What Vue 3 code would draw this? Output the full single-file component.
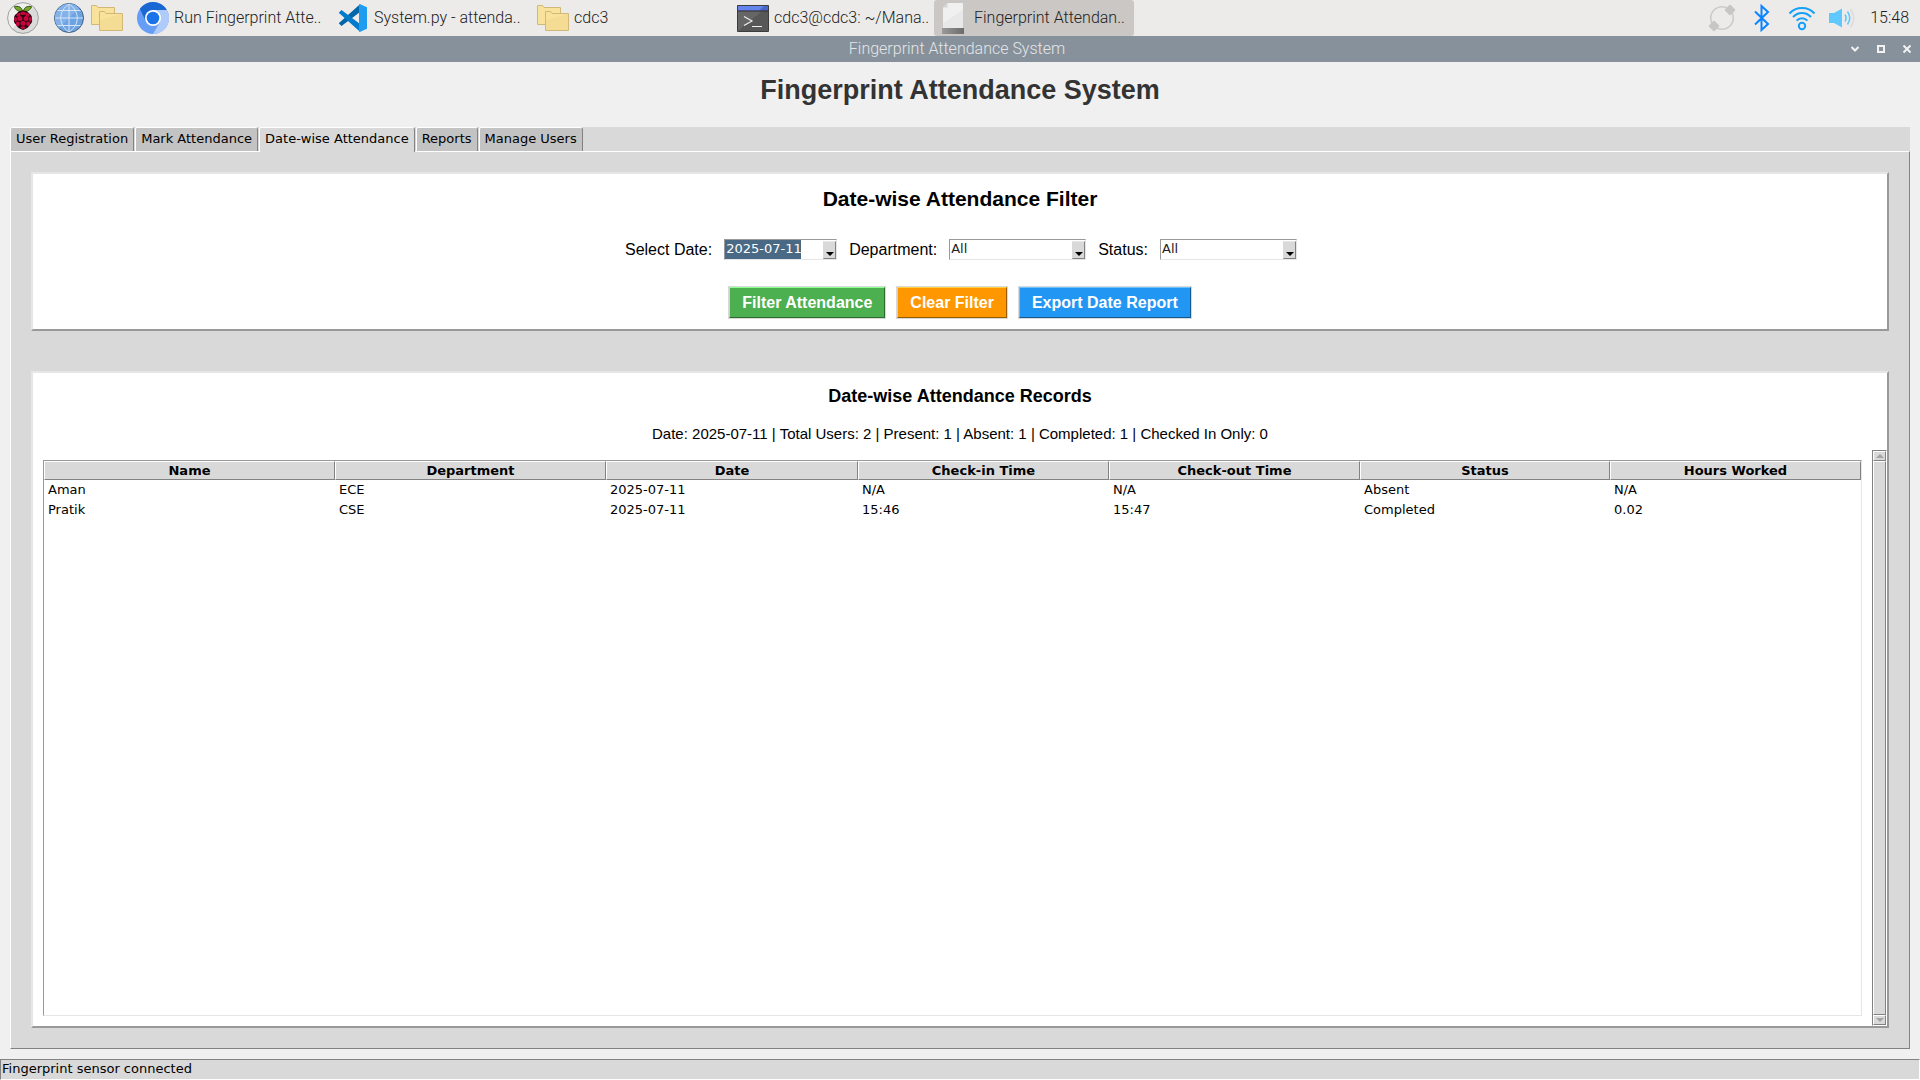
<script setup>
import { ref } from 'vue'

const launchers = [
  { icon: 'menu', label: 'Menu' },
  { icon: 'globe', label: 'Web Browser' },
  { icon: 'folder', label: 'File Manager' },
]
const tasks = [
  { icon: 'chromium', title: 'Run Fingerprint Atte..' },
  { icon: 'code', title: 'System.py - attenda..' },
  { icon: 'folder', title: 'cdc3' },
  { icon: 'terminal', title: 'cdc3@cdc3: ~/Mana..' },
  { icon: 'document', title: 'Fingerprint Attendan..', active: true },
]
const tabs = ['User Registration', 'Mark Attendance', 'Date-wise Attendance', 'Reports', 'Manage Users']
const activeTab = ref('Date-wise Attendance')

const date = ref('2025-07-11')
const department = ref('All')
const status = ref('All')

const columns = [
  { name: 'Name', width: 291 },
  { name: 'Department', width: 271 },
  { name: 'Date', width: 252 },
  { name: 'Check-in Time', width: 251 },
  { name: 'Check-out Time', width: 251 },
  { name: 'Status', width: 250 },
  { name: 'Hours Worked', width: 251 },
]
const records = [
  ['Aman', 'ECE', '2025-07-11', 'N/A', 'N/A', 'Absent', 'N/A'],
  ['Pratik', 'CSE', '2025-07-11', '15:46', '15:47', 'Completed', '0.02'],
]
</script>

<template>
  <svg class="defs" width="0" height="0" aria-hidden="true">
    <defs>
      <linearGradient id="g-term" x1="0" y1="0" x2="1" y2="1">
        <stop offset="0.5" stop-color="#666" /><stop offset="0.5" stop-color="#575757" />
      </linearGradient>
      <linearGradient id="g-doc" x1="0" y1="0" x2="1" y2="0">
        <stop offset="0" stop-color="#999" /><stop offset="1" stop-color="#6b6b6b" />
      </linearGradient>
    </defs>
    <symbol id="i-menu" viewBox="0 0 32 32">
      <circle cx="16" cy="16" r="15.4" fill="#dadada" />
      <path d="M5 27A15.400 15.400 0 0 1 27 5z" fill="#efefef" />
      <circle cx="16" cy="16" r="15.4" fill="none" stroke="#a0a0a0" />
      <path d="M15.6 9.4C12 10 8 8 7.500 4.600c3.500-.8 7.200 0 8.100 4.800zM16.400 9.400c3.600.6 7.600-1.400 8.100-4.800-3.500-.8-7.200 0-8.100 4.800z" fill="#75a928" stroke="#2b4a10" stroke-width=".9" />
      <path d="M16 8.500c3 0 5 1 6.200 3 2 1 3 3 2.600 5 1 2.500 0 5-2 6.300-1 2.700-3.500 4-6.800 5.200-3.300-1.200-5.800-2.500-6.800-5.200-2-1.300-3-3.800-2-6.300-.4-2 .6-4 2.600-5 1.200-2 3.200-3 6.200-3z" fill="#2a0410" />
      <g fill="#c7053d">
        <ellipse cx="16" cy="11.200" rx="2.700" ry="1.700" /><ellipse cx="11.600" cy="12.800" rx="2.300" ry="1.700" transform="rotate(-35 11.600 12.800)" />
        <ellipse cx="20.400" cy="12.800" rx="2.300" ry="1.700" transform="rotate(35 20.400 12.800)" />
        <circle cx="12.900" cy="16.600" r="2.500" /><circle cx="19.100" cy="16.600" r="2.500" />
        <ellipse cx="8.600" cy="17.300" rx="1.400" ry="2.500" /><ellipse cx="23.400" cy="17.300" rx="1.400" ry="2.500" />
        <circle cx="16" cy="21.200" r="2.500" /><ellipse cx="10.800" cy="21.800" rx="2" ry="2.400" /><ellipse cx="21.200" cy="21.800" rx="2" ry="2.400" />
        <ellipse cx="16" cy="25.600" rx="2.400" ry="1.400" />
      </g>
    </symbol>
    <symbol id="i-globe" viewBox="0 0 32 32">
      <circle cx="16" cy="16" r="14.500" fill="#6ea3e2" stroke="#43607f" />
      <path d="M6 26A14 14 0 0 1 26 6z" fill="#83b1e8" />
      <path d="M16 2v28M2 16h28M4.500 8.500h23M4.500 23.500h23M16 2C5 9 5 23 16 30M16 2c11 7 11 21 0 28" fill="none" stroke="#d4e5f8" stroke-width="1" />
    </symbol>
    <symbol id="i-folder" viewBox="0 0 32 32">
      <path d="M.5 22.500V3.500h5l1.500 2h16.500v17z" fill="#f8e29c" stroke="#d2b878" />
      <path d="M8.500 28.500v-19h5l1.500 2h16.500v17z" fill="#f8e29c" stroke="#d2b878" />
      <path d="M9 28V18L31 12v16z" fill="#f5dc94" />
    </symbol>
    <symbol id="i-chromium" viewBox="0 0 32 32">
      <circle cx="16" cy="16" r="16" fill="#669df6" />
      <path d="M16 16V8h13.860A16 16 0 0 1 16 32l6.930-12z" fill="#aecbfa" />
      <path d="M16 8h13.860A16 16 0 0 0 2.900 6.800L9.070 20z" fill="#1967d2" />
      <circle cx="16" cy="16" r="8" fill="#fff" /><circle cx="16" cy="16" r="6.300" fill="#1a73e8" />
    </symbol>
    <symbol id="i-code" viewBox="0 0 32 32">
      <path d="M2 21.600 4.500 24 23 10V2.200L2.600 20.600a.8.8 0 0 0-.6 1z" fill="#0065a9" />
      <path d="M2 10.400 4.500 8 23 22v7.800L2.600 11.400a.8.8 0 0 1-.6-1z" fill="#007acc" />
      <path d="M22.800 2 30 5.200v21.600L22.800 30l-.8-.8V2.800z" fill="#1f9cf0" />
    </symbol>
    <symbol id="i-terminal" viewBox="0 0 32 32">
      <path d="M.5 3.500h31v26H.5z" fill="url(#g-term)" stroke="#3c3c3c" />
      <path d="M1 4h30v4.500H1z" fill="#4a66c8" /><path d="M1 4h26l-5 4.500H1z" fill="#6585ee" />
      <path d="M1 9h30" stroke="#2e2e38" />
      <path d="m7 14.500 8 4.500-8 4.500M15 24.500h10" fill="none" stroke="#f0f0f0" stroke-width="1.200" />
    </symbol>
    <symbol id="i-document" viewBox="0 0 32 32">
      <path d="M6 5.500 10.500 1H26v26H6z" fill="#f0f0f0" /><path d="M6 21 26 8v18H6z" fill="#e8e8e8" />
      <path d="M6 5.500 10.500 1v4.500z" fill="#d5d5d5" />
      <path d="M5 26h22v6H5z" fill="url(#g-doc)" />
    </symbol>
    <symbol id="i-sync" viewBox="0 0 28 28">
      <circle cx="14" cy="14" r="11.300" fill="none" stroke="#cbcbcb" stroke-width="1.500" />
      <rect x="18" y="2" width="8" height="8" rx="1" fill="#c6c6c6" transform="rotate(45 22 6)" />
      <rect x="2" y="18" width="8" height="8" rx="1" fill="#c6c6c6" transform="rotate(45 6 22)" />
    </symbol>
    <symbol id="i-bluetooth" viewBox="0 0 28 28">
      <path d="m7 7.500 13 12.500-6.500 6V2L20 8 7 20.500" fill="none" stroke="#0a84ff" stroke-width="2" />
    </symbol>
    <symbol id="i-wifi" viewBox="0 0 28 28">
      <g fill="none" stroke="#14a0fb" stroke-width="2">
        <path d="M1.500 9.500C8 2.200 20 2.200 26.500 9.500M5 13c5-5.500 13-5.500 18 0M8.600 16.600c3-3.200 7.800-3.200 10.800 0" />
        <circle cx="14" cy="22" r="3.200" />
      </g>
    </symbol>
    <symbol id="i-volume" viewBox="0 0 28 28">
      <path d="M1 9h5l8-4.500v19L6 19H1z" fill="#5fc8ff" />
      <path d="M17 10.500q2.200 3.500 0 7M19.500 7.500q4.500 6.500 0 13" fill="none" stroke="#5fc8ff" stroke-width="1.600" />
      <path d="M22.500 5q6.500 9 0 18" fill="none" stroke="#dcdcdc" stroke-width="1.600" />
    </symbol>
  </svg>

  <div class="desktop">
    <header class="taskbar">
      <nav class="launchers" aria-label="Launchers">
        <button v-for="l in launchers" :key="l.icon" type="button" :class="l.icon" :aria-label="l.label">
          <svg width="32" height="32"><use :href="'#i-' + l.icon" /></svg>
        </button>
      </nav>
      <div class="tasks">
        <button v-for="t in tasks" :key="t.title" type="button" class="task" :class="{ active: t.active }">
          <svg width="32" height="32"><use :href="'#i-' + t.icon" /></svg>
          <span>{{ t.title }}</span>
        </button>
      </div>
      <div class="tray">
        <button v-for="i in ['sync', 'bluetooth', 'wifi', 'volume']" :key="i" type="button" :aria-label="i">
          <svg width="28" height="28"><use :href="'#i-' + i" /></svg>
        </button>
        <time>15:48</time>
      </div>
    </header>

    <div class="titlebar">
      <span class="window-title">Fingerprint Attendance System</span>
      <div class="window-buttons">
        <button type="button" aria-label="Minimize"><svg width="10" height="10"><path d="m1.500 3 3.500 3.500L8.500 3" /></svg></button>
        <button type="button" aria-label="Maximize"><svg width="10" height="10"><path d="M2 2h6v6H2z" /></svg></button>
        <button type="button" aria-label="Close"><svg width="10" height="10"><path d="m1.500 1.500 7 7m0-7-7 7" /></svg></button>
      </div>
    </div>

    <main class="window">
      <h1>Fingerprint Attendance System</h1>

      <div class="notebook">
        <div class="tabs" role="tablist">
          <button
            v-for="t in tabs" :key="t" type="button" role="tab" class="tab"
            :class="{ selected: t === activeTab }" :aria-selected="t === activeTab" @click="activeTab = t"
          >{{ t }}</button>
        </div>

        <div class="page">
          <section class="panel filter">
            <h2>Date-wise Attendance Filter</h2>
            <form class="fields" @submit.prevent>
              <label for="date">Select Date:</label>
              <span class="combo date">
                <input id="date" v-model="date" type="text" />
                <span class="drop" aria-hidden="true"></span>
              </span>
              <label for="department">Department:</label>
              <span class="combo">
                <select id="department" v-model="department"><option>All</option><option>CSE</option><option>ECE</option></select>
                <span class="drop" aria-hidden="true"></span>
              </span>
              <label for="status">Status:</label>
              <span class="combo">
                <select id="status" v-model="status"><option>All</option><option>Absent</option><option>Completed</option></select>
                <span class="drop" aria-hidden="true"></span>
              </span>
            </form>
            <div class="actions">
              <button type="button" class="action green">Filter Attendance</button>
              <button type="button" class="action orange">Clear Filter</button>
              <button type="button" class="action blue">Export Date Report</button>
            </div>
          </section>

          <section class="panel records">
            <h3>Date-wise Attendance Records</h3>
            <p class="summary">Date: 2025-07-11 | Total Users: 2 | Present: 1 | Absent: 1 | Completed: 1 | Checked In Only: 0</p>
            <div class="listing">
              <div class="tree">
                <table>
                  <colgroup><col v-for="c in columns" :key="c.name" :style="{ width: c.width / 18.17 + '%' }" /></colgroup>
                  <thead>
                    <tr><th v-for="c in columns" :key="c.name" scope="col">{{ c.name }}</th></tr>
                  </thead>
                  <tbody>
                    <tr v-for="r in records" :key="r[0]"><td v-for="(v, i) in r" :key="i">{{ v }}</td></tr>
                  </tbody>
                </table>
              </div>
              <div class="scrollbar" aria-hidden="true">
                <span class="step up"></span>
                <span class="thumb"></span>
                <span class="step down"></span>
              </div>
            </div>
          </section>
        </div>
      </div>
    </main>

    <footer class="status">Fingerprint sensor connected</footer>
  </div>
</template>

<style>
body { margin: 0; background: #f0f0f0; }
</style>

<style scoped>
* { box-sizing: border-box; }
button { margin: 0; padding: 0; border: 0; background: none; font: inherit; color: inherit; }
svg { display: block; flex: none; }
.defs { position: absolute; }
.desktop {
  display: flex; flex-direction: column; min-height: 100vh;
  font: 13px/16px "DejaVu Sans", sans-serif; color: #000;
}

.taskbar {
  display: flex; height: 36px; background: #edebe9;
  font: 300 16px/36px Roboto, sans-serif; color: #222;
}
.launchers { display: flex; align-items: center; padding: 0 11px 0 7px; }
.launchers .globe { margin: 0 6px 0 14px; }
.tasks { display: flex; flex: 1; }
.task { display: flex; align-items: center; gap: 5px; width: 200px; padding-left: 3px; border-radius: 3px; white-space: nowrap; }
.task.active { background: #cbc7c4; }
.tray { display: flex; align-items: center; gap: 12px; padding-right: 11px; }
.tray time { padding-left: 2px; }

.titlebar {
  display: flex; align-items: center; height: 26px; padding-left: 88px; background: #87919b;
  font: 300 16px/26px Roboto, sans-serif; color: #e3e6e8;
}
.window-title { flex: 1; text-align: center; }
.window-buttons { display: flex; gap: 16px; width: 94px; padding: 0 8px; justify-content: flex-end; }
.window-buttons path { fill: none; stroke: #f2f2f2; stroke-width: 2; }

.window { display: flex; flex: 1; flex-direction: column; padding: 0 10px 10px; background: #f0f0f0; }
h1 { margin: 0; padding: 12px 0 21px; font: bold 27px/32px "Liberation Sans", sans-serif; color: #333; text-align: center; }

.notebook { display: flex; flex: 1; flex-direction: column; }
.tabs { display: flex; height: 24px; gap: 1px; background: #d9d9d9; }
.tab {
  height: 24px; padding: 0 5px 1px; background: #c3c3c3; white-space: nowrap;
  border: 1px solid; border-color: #fff #828282 transparent #fff; border-bottom: 0; border-radius: 2px 3px 0 0;
}
.tab.selected { position: relative; z-index: 1; height: 25px; padding-bottom: 2px; background: #d9d9d9; }
.page {
  display: flex; flex: 1; flex-direction: column; gap: 40px; padding: 20px;
  background: #d9d9d9; border: 1px solid; border-color: #fff #828282 #828282 #fff;
}
.panel { background: #fff; border: 2px solid; border-color: #e6e6e6 #999 #999 #e6e6e6; text-align: center; }

.filter { padding: 10px; }
h2 { margin: 0; font: bold 21px/30px "Liberation Sans", sans-serif; }
.fields {
  display: flex; justify-content: center; align-items: center; gap: 12px; margin-top: 25px; padding-left: 2px;
  font: 16px/21px "Liberation Sans", sans-serif;
}
.combo { position: relative; display: flex; width: 137px; height: 21px; border: 1px solid; border-color: #999 #e6e6e6 #e6e6e6 #999; }
.combo.date { width: 113px; }
.combo input, .combo select {
  width: 100%; margin: 0; padding: 0 0 2px 1px; border: 0; border-radius: 0; outline: 0; appearance: none;
  background: #fff; color: #222; font: 13px/17px "DejaVu Sans", sans-serif;
}
.combo input { color: #fff; background: linear-gradient(#4a6984, #4a6984) no-repeat 0 0 / 76px 100% #fff; }
.drop {
  position: absolute; top: 1px; right: 0; bottom: 0; width: 13px; pointer-events: none;
  background: #d9d9d9; border: 1px solid; border-color: #e6e6e6 #828282 #828282 #d9d9d9;
}
.drop::after {
  content: ""; position: absolute; left: 2px; bottom: 2px;
  border: 4px solid transparent; border-top-color: #000; border-bottom: 0;
}
.actions { display: flex; justify-content: center; gap: 10px; margin-top: 26px; }
.action {
  height: 33px; padding: 0 12px; color: #fff; white-space: nowrap;
  font: bold 16px/29px "Liberation Sans", sans-serif;
  border: 2px solid; outline: 1px solid #d9d9d9; outline-offset: -1px;
}
.green { background: #4caf50; border-color: #8cff94 #2e6b30 #2e6b30 #8cff94; }
.orange { background: #ff9800; border-color: #ffd040 #995b00 #995b00 #ffd040; }
.blue { background: #2196f3; border-color: #6cc4ff #145a92 #145a92 #6cc4ff; }

.records { display: flex; flex: 1; flex-direction: column; }
h3 { margin: 0; padding: 11px 0 15px; font: bold 18px/24px "Liberation Sans", sans-serif; }
.summary { margin: 0; font: 15px/22px "Liberation Sans", sans-serif; }
.listing { display: flex; flex: 1; gap: 10px; padding-left: 10px; margin-top: 5px; }
.tree { flex: 1; margin: 10px 0; border: 1px solid; border-color: #999 #e6e6e6 #e6e6e6 #999; }
table { width: 100%; table-layout: fixed; border-collapse: separate; border-spacing: 0; text-align: left; }
th { height: 19px; padding: 0; background: #d9d9d9; border: 1px solid; border-color: #fff #828282 #828282 #fff; line-height: 16px; text-align: center; }
td { height: 20px; padding: 0 4px; line-height: 18px; }
.scrollbar {
  display: flex; flex-direction: column; width: 15px; background: #c3c3c3;
  border: 1px solid; border-color: #828282 #fff #fff #828282;
}
.step, .thumb { background: #d9d9d9; border: 1px solid; border-color: #fff #828282 #828282 #fff; }
.thumb { flex: 1; }
.step { display: flex; justify-content: center; align-items: center; height: 10px; }
.step::after { content: ""; border: 4px solid transparent; }
.up::after { border-bottom-color: #a3a3a3; border-top: 0; }
.down::after { border-top-color: #a3a3a3; border-bottom: 0; }

.status { height: 21px; padding: 0 1px; background: #d9d9d9; border: 1px solid; border-color: #828282 #fff #fff #828282; line-height: 18px; }
</style>
